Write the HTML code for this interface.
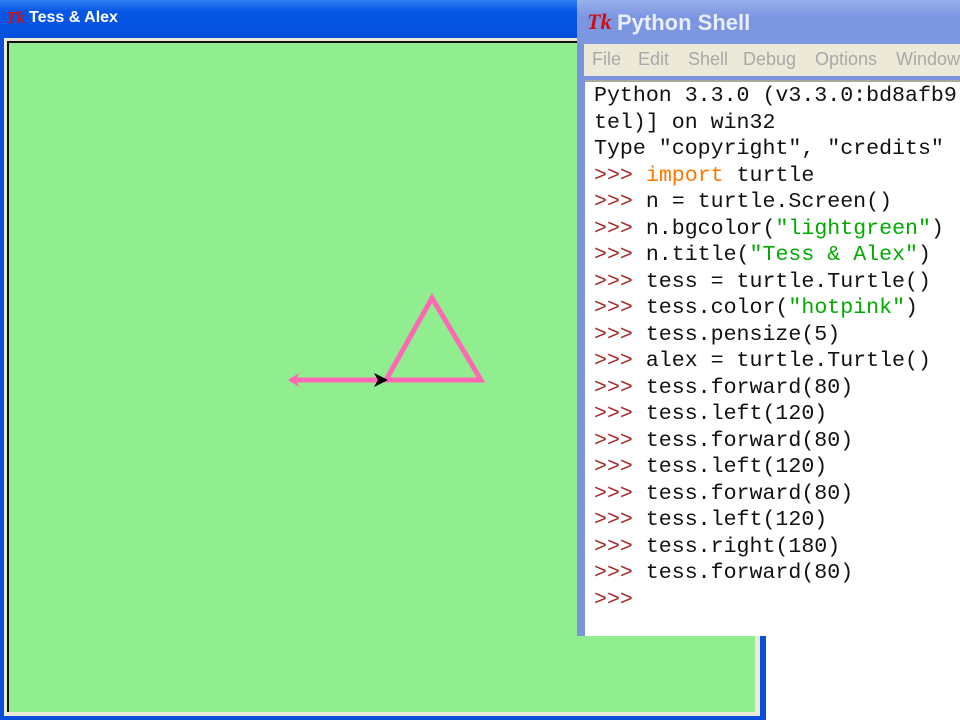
<!DOCTYPE html>
<html><head><style>
body{margin:0;width:960px;height:720px;position:relative;overflow:hidden;background:#fff;font-family:"Liberation Sans",sans-serif}
.tw{position:absolute;left:0;top:0;width:766px;height:720px;background:#0a4fdc}
.tt{position:absolute;left:0;top:0;width:766px;height:38px;background:linear-gradient(#2f7ff5,#0656e6 30%,#0450dc)}
.ttx{position:absolute;left:29px;top:9px;color:#fff;font-weight:bold;font-size:16px}
.logo{position:absolute;color:#d01010;font-style:italic;font-weight:bold;font-family:"Liberation Serif",serif}
.frame{position:absolute;left:4px;top:38px;width:756px;height:678px;background:#ece9d8}
.canvas{position:absolute;left:7px;top:41px;width:748px;height:671px;background:#90ee90;border-top:2px solid #111;border-left:2px solid #111;box-sizing:border-box}
.sw{position:absolute;left:577px;top:0;width:383px;height:636px;background:#7b93dc}
.st{position:absolute;left:0;top:0;width:383px;height:44px;background:linear-gradient(#98b0ea,#7b95e0 40%,#7c96e0)}
.stx{position:absolute;left:40px;top:10px;color:#e8eefc;font-weight:bold;font-size:22px}
.menu{position:absolute;left:7px;top:44px;width:376px;height:32px;background:#ece9d8;color:#a8a8a8;font-size:18px;white-space:nowrap}
.menu span{position:absolute;top:5px}
.txt{position:absolute;left:8px;top:80px;width:375px;height:556px;background:#fff;border-top:2px solid #aca899;box-sizing:border-box}
pre{margin:0;position:absolute;left:9px;top:1px;font-family:"Liberation Mono",monospace;font-size:21.6px;line-height:26.5px;color:#111}
.p{color:#a52a2a}.k{color:#ff7700}.s{color:#00aa00}
</style></head><body>
<div class="tw">
<div class="tt"><span class="logo" style="left:6px;top:8px;font-size:17px">Tk</span><span class="ttx">Tess &amp; Alex</span></div>
<div class="frame"></div>
<div class="canvas"></div>
<svg style="position:absolute;left:0;top:0" width="766" height="720">
<g stroke="#ff69b4" stroke-width="5" fill="none" stroke-linejoin="miter" stroke-linecap="round">
<polygon points="386,380 481,380 432,298"/>
<line x1="292" y1="380" x2="386" y2="380"/>
</g>
<polygon points="288,380 299,373 296,380 299,387" fill="#ff69b4"/>
<polygon points="388,380 374,373 378,380 374,387" fill="#000"/>
</svg>
</div>
<div class="sw">
<div class="st"><span class="logo" style="left:10px;top:9px;font-size:22px">Tk</span><span class="stx">Python Shell</span></div>
<div class="menu"><span style="left:8px">File</span><span style="left:54px">Edit</span><span style="left:104px">Shell</span><span style="left:159px">Debug</span><span style="left:231px">Options</span><span style="left:312px">Window</span></div>
<div class="txt"><pre>Python 3.3.0 (v3.3.0:bd8afb9
tel)] on win32
Type "copyright", "credits" 
<span class="p">&gt;&gt;&gt;</span> <span class="k">import</span> turtle
<span class="p">&gt;&gt;&gt;</span> n = turtle.Screen()
<span class="p">&gt;&gt;&gt;</span> n.bgcolor(<span class="s">"lightgreen"</span>)
<span class="p">&gt;&gt;&gt;</span> n.title(<span class="s">"Tess &amp; Alex"</span>)
<span class="p">&gt;&gt;&gt;</span> tess = turtle.Turtle()
<span class="p">&gt;&gt;&gt;</span> tess.color(<span class="s">"hotpink"</span>)
<span class="p">&gt;&gt;&gt;</span> tess.pensize(5)
<span class="p">&gt;&gt;&gt;</span> alex = turtle.Turtle()
<span class="p">&gt;&gt;&gt;</span> tess.forward(80)
<span class="p">&gt;&gt;&gt;</span> tess.left(120)
<span class="p">&gt;&gt;&gt;</span> tess.forward(80)
<span class="p">&gt;&gt;&gt;</span> tess.left(120)
<span class="p">&gt;&gt;&gt;</span> tess.forward(80)
<span class="p">&gt;&gt;&gt;</span> tess.left(120)
<span class="p">&gt;&gt;&gt;</span> tess.right(180)
<span class="p">&gt;&gt;&gt;</span> tess.forward(80)
<span class="p">&gt;&gt;&gt;</span></pre></div>
</div>
</body></html>
